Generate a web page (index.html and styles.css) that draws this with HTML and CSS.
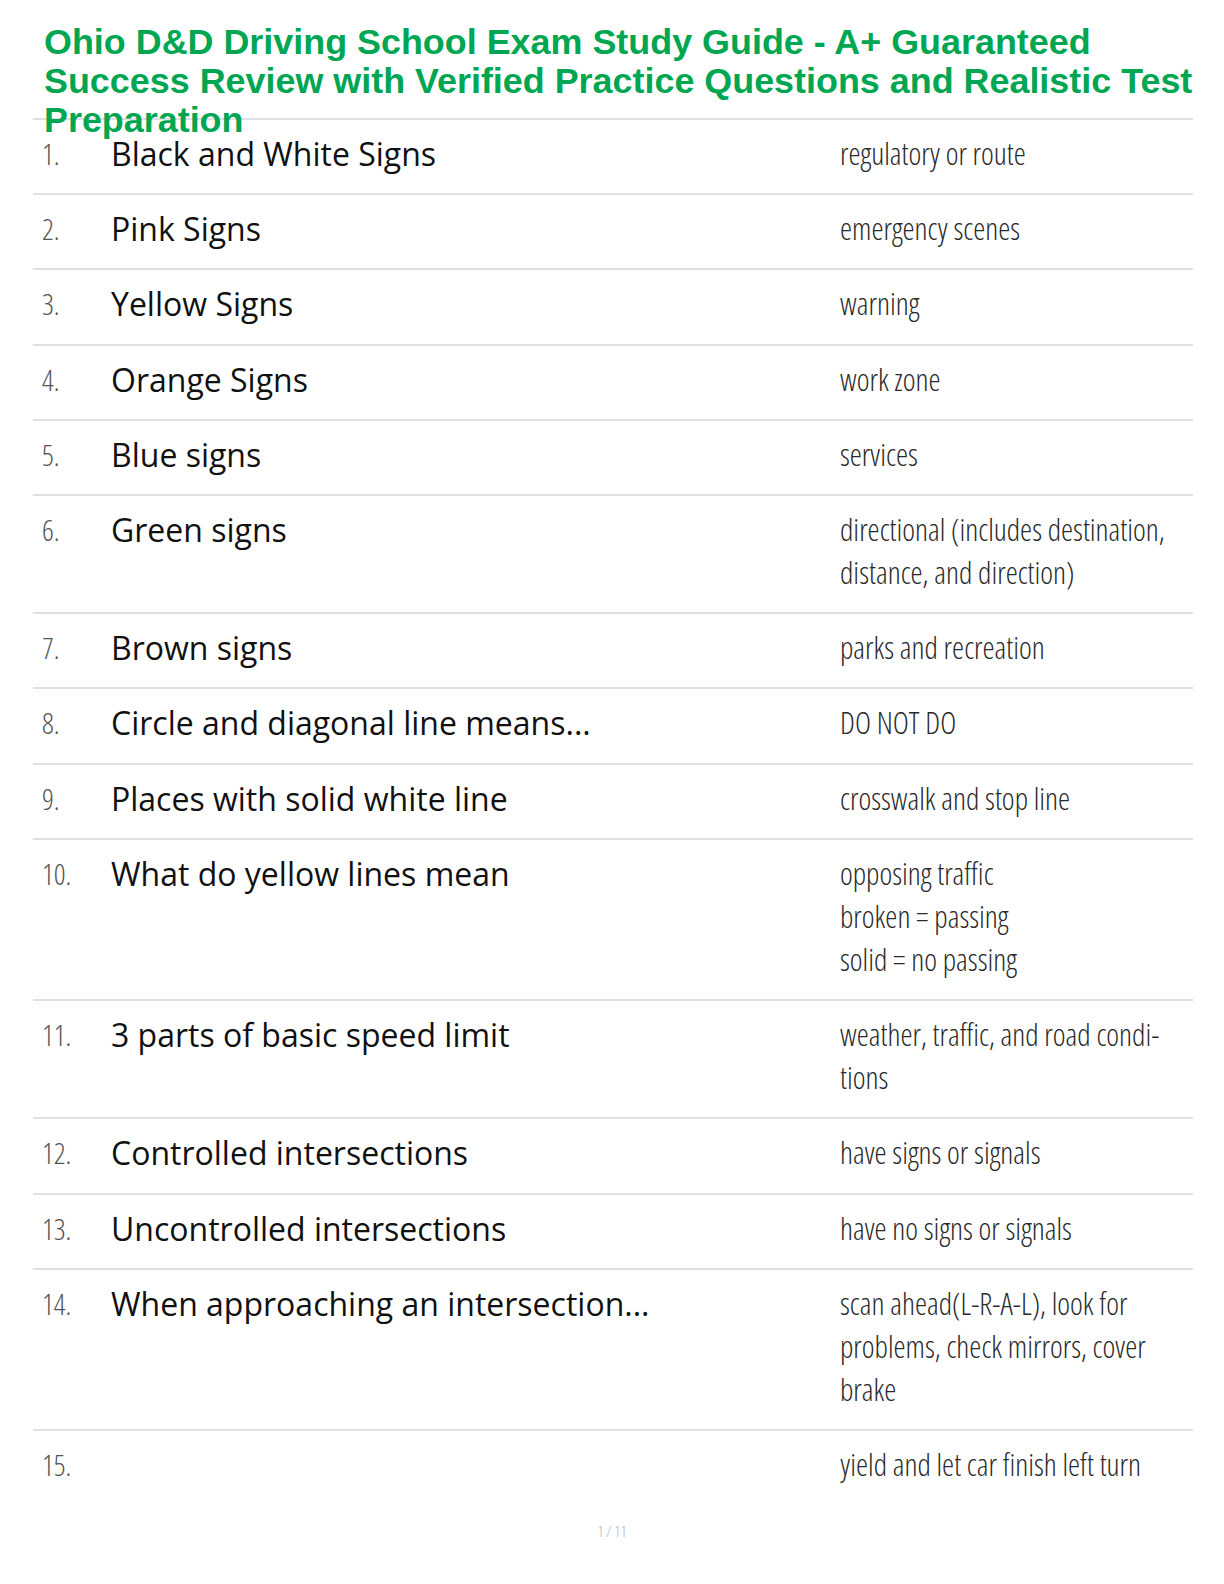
FILE: index.html
```html
<!DOCTYPE html>
<html lang="en">
<head>
<meta charset="utf-8">
<title>Ohio D&amp;D Driving School Exam Study Guide</title>
<link rel="stylesheet" href="styles.css">
</head>
<body>
<div class="page">
  <header class="doc-header">
    <h1 class="doc-title">Ohio D&amp;D Driving School Exam Study Guide - A+ Guaranteed Success Review with Verified Practice Questions and Realistic Test Preparation</h1>
  </header>
  <div class="cards">
    <div class="row"><div class="num">1.</div><div class="term">Black and White Signs</div><div class="def">regulatory or route</div></div>
    <div class="row"><div class="num">2.</div><div class="term">Pink Signs</div><div class="def">emergency scenes</div></div>
    <div class="row"><div class="num">3.</div><div class="term">Yellow Signs</div><div class="def">warning</div></div>
    <div class="row"><div class="num">4.</div><div class="term">Orange Signs</div><div class="def">work zone</div></div>
    <div class="row"><div class="num">5.</div><div class="term">Blue signs</div><div class="def">services</div></div>
    <div class="row"><div class="num">6.</div><div class="term">Green signs</div><div class="def">directional (includes destination, distance, and direction)</div></div>
    <div class="row"><div class="num">7.</div><div class="term">Brown signs</div><div class="def">parks and recreation</div></div>
    <div class="row"><div class="num">8.</div><div class="term">Circle and diagonal line means...</div><div class="def">DO NOT DO</div></div>
    <div class="row"><div class="num">9.</div><div class="term">Places with solid white line</div><div class="def">crosswalk and stop line</div></div>
    <div class="row"><div class="num">10.</div><div class="term">What do yellow lines mean</div><div class="def">opposing traffic<br>broken = passing<br>solid = no passing</div></div>
    <div class="row"><div class="num">11.</div><div class="term">3 parts of basic speed limit</div><div class="def">weather, traffic, and road condi-<br>tions</div></div>
    <div class="row"><div class="num">12.</div><div class="term">Controlled intersections</div><div class="def">have signs or signals</div></div>
    <div class="row"><div class="num">13.</div><div class="term">Uncontrolled intersections</div><div class="def">have no signs or signals</div></div>
    <div class="row"><div class="num">14.</div><div class="term">When approaching an intersection...</div><div class="def">scan ahead(L-R-A-L), look for<br>problems, check mirrors, cover<br>brake</div></div>
    <div class="row"><div class="num">15.</div><div class="term"></div><div class="def">yield and let car finish left turn</div></div>
  </div>
  <footer class="page-num">1 / 11</footer>
</div>
</body>
</html>
```

FILE: styles.css
```css
html, body {
  margin: 0;
  padding: 0;
  background: #ffffff;
}

.page {
  width: 1224px;
  padding-top: 23px;
  box-sizing: border-box;
}

.doc-header {
  height: 95px;
  padding: 0 10px 0 44px;
}

.doc-title {
  margin: 0;
  font-family: "Liberation Sans", Arial, sans-serif;
  font-weight: 700;
  font-size: 35.9px;
  line-height: 39px;
  color: #00a651;
}

.cards {
  margin: 0 31px 0 33px;
}

.row {
  display: grid;
  grid-template-columns: 78px 729px 1fr;
  border-top: 2px solid #dfdfe6;
  padding: 12px 0 18.1px;
}

.row:last-child {
  padding-bottom: 0;
}

.num {
  padding-left: 9px;
  font-family: "Open Sans", sans-serif;
  font-weight: 300;
  font-stretch: 75%;
  font-size: 29px;
  line-height: 43.1px;
  color: #555555;
}

.term {
  font-family: "Open Sans", sans-serif;
  font-weight: 400;
  font-size: 32px;
  line-height: 43.1px;
  color: #111111;
}

.def {
  padding-right: 10px;
  font-family: "Open Sans", sans-serif;
  font-weight: 300;
  font-stretch: 75%;
  font-size: 30.5px;
  line-height: 43.1px;
  color: #2a2a2a;
}

.page-num {
  margin-top: 35px;
  text-align: center;
  font-family: "Open Sans", sans-serif;
  font-weight: 300;
  font-stretch: 75%;
  font-size: 15px;
  color: #b0b0b0;
}
```
